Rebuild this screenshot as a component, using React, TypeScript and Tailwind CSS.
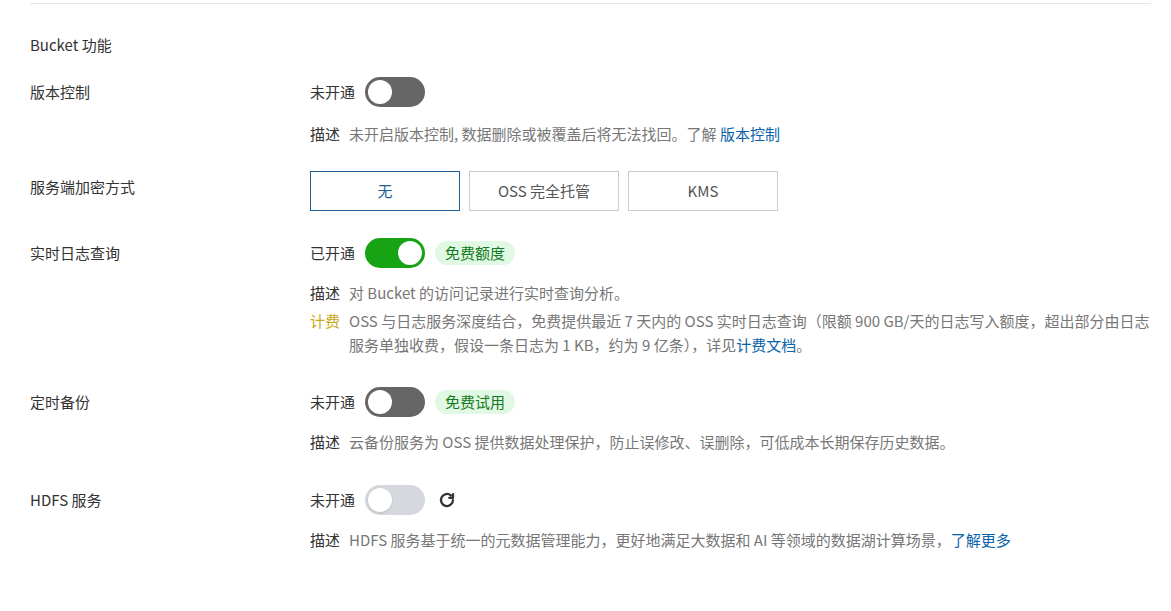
import React from "react";

const F = { fontFamily: '"Noto Sans CJK SC", "Noto Sans", sans-serif' };

function Toggle({ on, disabled }: { on?: boolean; disabled?: boolean }) {
  const bg = disabled ? "bg-[#d5d8dc]" : on ? "bg-[#16a314]" : "bg-[#666666]";
  return (
    <div className={`w-[60px] h-[30px] rounded-full ${bg} p-[3px] flex ${on ? "justify-end" : "justify-start"}`}>
      <div className={`w-[24px] h-[24px] rounded-full bg-white ${disabled ? "shadow" : ""}`} />
    </div>
  );
}

function Badge({ t }: { t: string }) {
  return <span className="ml-[10px] px-[10px] h-[24px] leading-[24px] rounded-full bg-[#e0f8e4] text-[#147a20] text-[15px]">{t}</span>;
}

function Desc({ k, children, kc = "text-[#333]" }: { k: string; children: React.ReactNode; kc?: string }) {
  return (
    <div className="flex text-[15px] leading-[24px]">
      <span className={`${kc} w-[39px] shrink-0`}>{k}</span>
      <span className="text-[#777]">{children}</span>
    </div>
  );
}

function Row({ label, children, mt }: { label: string; children: React.ReactNode; mt: string }) {
  return (
    <div className={`flex ${mt}`}>
      <div className="w-[280px] shrink-0 text-[15px] text-[#333] leading-[30px]">{label}</div>
      <div className="flex-1">{children}</div>
    </div>
  );
}

function SwitchLine({ state, on, disabled, children }: { state: string; on?: boolean; disabled?: boolean; children?: React.ReactNode }) {
  return (
    <div className="flex items-center h-[30px] text-[15px] text-[#333]">
      <span className="mr-[10px]">{state}</span>
      <Toggle on={on} disabled={disabled} />
      {children}
    </div>
  );
}

export default function App() {
  return (
    <div style={F} className="w-[1171px] h-[611px] bg-white pl-[30px] pr-[20px] overflow-hidden font-normal">
      <div className="border-t border-[#e5e5e5] mt-[3px]" />
      <div className="mt-[30px] text-[15px] text-[#333] leading-[22px]">Bucket 功能</div>
      <Row label="版本控制" mt="mt-[21px]">
        <SwitchLine state="未开通" />
        <div className="mt-[15px]">
          <Desc k="描述">未开启版本控制, 数据删除或被覆盖后将无法找回。了解 <span className="text-[#0a62a8]">版本控制</span></Desc>
        </div>
      </Row>
      <Row label="服务端加密方式" mt="mt-[26px]">
        <div className="flex gap-[9px] -mt-[1px]">
          <div className="w-[150px] h-[40px] border border-[#1d5f94] text-[#1d5f94] flex items-center justify-center text-[15px]">无</div>
          <div className="w-[150px] h-[40px] border border-[#ccc] text-[#555] flex items-center justify-center text-[15px]">OSS 完全托管</div>
          <div className="w-[150px] h-[40px] border border-[#ccc] text-[#555] flex items-center justify-center text-[15px]">KMS</div>
        </div>
      </Row>
      <Row label="实时日志查询" mt="mt-[27px]">
        <SwitchLine state="已开通" on><Badge t="免费额度" /></SwitchLine>
        <div className="mt-[13px] flex flex-col gap-[4px]">
          <Desc k="描述">对 Bucket 的访问记录进行实时查询分析。</Desc>
          <Desc k="计费" kc="text-[#c8a815]">OSS 与日志服务深度结合，免费提供最近 7 天内的 OSS 实时日志查询（限额 900 GB/天的日志写入额度，超出部分由日志服务单独收费，假设一条日志为 1 KB，约为 9 亿条），详见<span className="text-[#0a62a8]">计费文档</span>。</Desc>
        </div>
      </Row>
      <Row label="定时备份" mt="mt-[30px]">
        <SwitchLine state="未开通"><Badge t="免费试用" /></SwitchLine>
        <div className="mt-[13px]">
          <Desc k="描述">云备份服务为 OSS 提供数据处理保护，防止误修改、误删除，可低成本长期保存历史数据。</Desc>
        </div>
      </Row>
      <Row label="HDFS 服务" mt="mt-[31px]">
        <SwitchLine state="未开通" disabled>
          <svg className="ml-[13px]" width="18" height="18" viewBox="0 0 24 24" fill="none" stroke="#333" strokeWidth="3" strokeLinecap="round">
            <path d="M20 12a8 8 0 1 1-2.6-5.9" />
            <path d="M20 4v5h-5" strokeLinejoin="round" />
          </svg>
        </SwitchLine>
        <div className="mt-[13px]">
          <Desc k="描述">HDFS 服务基于统一的元数据管理能力，更好地满足大数据和 AI 等领域的数据湖计算场景，<span className="text-[#0a62a8]">了解更多</span></Desc>
        </div>
      </Row>
    </div>
  );
}
